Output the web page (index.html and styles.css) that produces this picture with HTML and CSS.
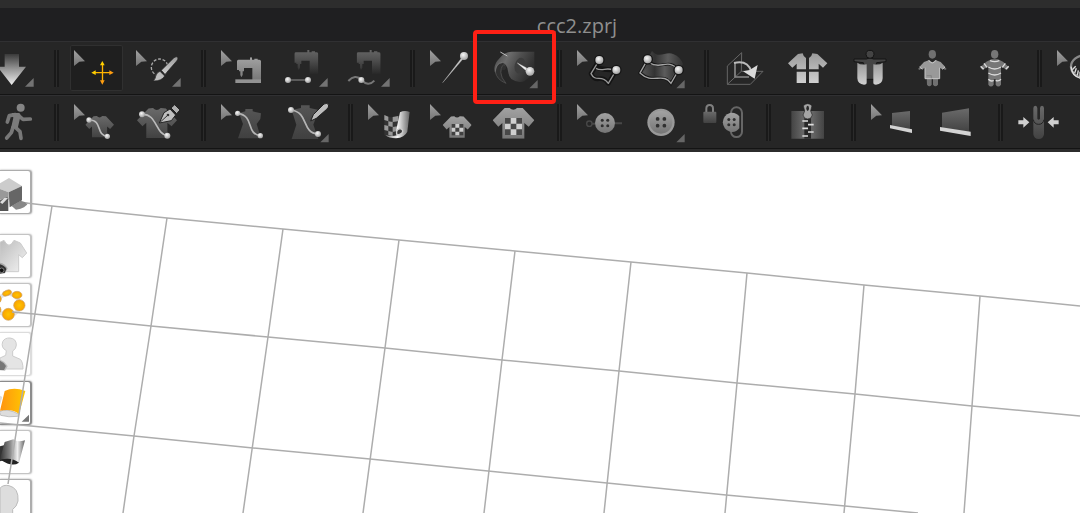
FILE: index.html
```
<!DOCTYPE html>
<html lang="en">
<head>
<meta charset="utf-8">
<title>ccc2.zprj</title>
<link rel="stylesheet" href="styles.css">
</head>
<body>
<svg class="defs" aria-hidden="true">
  <defs>
    <linearGradient id="light" x1="0" y1="0" x2="0" y2="1"><stop offset="0" stop-color="#9a9a9a"/><stop offset="1" stop-color="#d0d0d0"/></linearGradient>
    <linearGradient id="fade" x1="0" y1="0" x2="0" y2="1"><stop offset="0" stop-color="#3a3a3a"/><stop offset=".5" stop-color="#999"/><stop offset="1" stop-color="#eee"/></linearGradient>
    <linearGradient id="mid" x1="0" y1="0" x2="0" y2="1"><stop offset="0" stop-color="#a2a2a2"/><stop offset="1" stop-color="#757575"/></linearGradient>
    <linearGradient id="dim" x1="0" y1="0" x2="0" y2="1"><stop offset="0" stop-color="#6a6a6a"/><stop offset="1" stop-color="#424242"/></linearGradient>
    <linearGradient id="dark" x1="0" y1="0" x2="0" y2="1"><stop offset="0" stop-color="#555"/><stop offset="1" stop-color="#404040"/></linearGradient>
    <linearGradient id="vanish" x1="0" y1="0" x2="0" y2="1"><stop offset="0" stop-color="#666"/><stop offset=".4" stop-color="#505050"/><stop offset="1" stop-color="#282828"/></linearGradient>
    <linearGradient id="gold" x1="0" y1="0" x2="1" y2="0"><stop offset="0" stop-color="#ff9410"/><stop offset="1" stop-color="#ffc800"/></linearGradient>
    <linearGradient id="tube" x1="0" y1="0" x2="1" y2="0"><stop offset="0" stop-color="#777"/><stop offset=".5" stop-color="#f4f4f4"/><stop offset="1" stop-color="#666"/></linearGradient>
    <linearGradient id="waves" x1="0" y1="0" x2="1" y2="0"><stop offset="0" stop-color="#555"/><stop offset=".35" stop-color="#333"/><stop offset=".65" stop-color="#5c5c5c"/><stop offset="1" stop-color="#303030"/></linearGradient>
    <linearGradient id="roll" x1="0" y1="0" x2="1" y2=".4"><stop offset="0" stop-color="#444"/><stop offset=".35" stop-color="#6c6c6c"/><stop offset=".6" stop-color="#505050"/><stop offset="1" stop-color="#2e2e2e"/></linearGradient>
    <linearGradient id="paper" x1="0" y1="0" x2="1" y2="1"><stop offset="0" stop-color="#bbb"/><stop offset="1" stop-color="#f4f4f4"/></linearGradient>
    <linearGradient id="metal" x1="0" y1="0" x2="1" y2="0"><stop offset="0" stop-color="#333"/><stop offset=".4" stop-color="#888"/><stop offset=".7" stop-color="#eee"/><stop offset="1" stop-color="#666"/></linearGradient>
    <linearGradient id="plate" x1="0" y1="0" x2="1" y2="0"><stop offset="0" stop-color="#444"/><stop offset=".35" stop-color="#666"/><stop offset=".65" stop-color="#666"/><stop offset="1" stop-color="#444"/></linearGradient>
    <radialGradient id="pearl" cx=".4" cy=".35" r=".7"><stop offset="0" stop-color="#f8f8f8"/><stop offset="1" stop-color="#9c9c9c"/></radialGradient>
    <radialGradient id="amber" cx=".5" cy=".5" r=".6"><stop offset="0" stop-color="#ffc400"/><stop offset="1" stop-color="#f79a00"/></radialGradient>
  </defs>
  <symbol id="cursor" viewBox="0 0 159 138"><path d="M12 15L45 49L28 50L12 63Z" fill="url(#mid)"/></symbol>
  <symbol id="more" viewBox="0 0 159 138"><path d="M146 99V125H120Z" fill="#737373"/></symbol>
  <symbol id="more-low" viewBox="0 0 159 138"><path d="M149 105V130H124Z" fill="#666"/></symbol>
  <symbol id="tee" viewBox="0 0 125 93"><path d="M36 1L50 0Q62 12 74 0L90 1L125 38L108 57L95 46V93H29V46L17 57L0 38Z"/></symbol>
  <symbol id="machine" viewBox="0 0 72 72"><path d="M4 7H39V0H45V7H52V4H62V7H67Q72 7 72 12V72H46V32H21V42H17V53L13 60L10 53V42H6V38H0V12Q0 7 4 7Z"/></symbol>
  <symbol id="holes" viewBox="0 0 30 30"><g fill="#303030"><circle cx="6" cy="6" r="5"/><circle cx="24" cy="6" r="5"/><circle cx="6" cy="24" r="5"/><circle cx="24" cy="24" r="5"/></g></symbol>
</svg>

<header class="app-head">
  <div class="top-strip"></div>
  <h1 class="title">ccc2.zprj</h1>

  <div class="toolbar" role="toolbar" aria-label="Simulation and sewing tools">
    <button class="tool" aria-label="Simulate"><svg viewBox="0 0 159 138"><path d="M59 27H102V65H123L80 120L37 65H59Z" fill="url(#fade)"/><use href="#more"/></svg></button>
    <span class="sep"></span>
    <button class="tool active" aria-label="Select and move"><svg viewBox="0 0 159 138"><use href="#cursor"/><g stroke="#ffb400" stroke-width="4"><path d="M72 83H123M97.500 56V111"/></g><path d="M64 83L77 76V90Z" fill="#ffd000"/><path d="M97 48L104 61H90Z" fill="#ffd000"/><path d="M131 83L118 76V90ZM97 119L104 106H90Z" fill="#ff9d10"/></svg></button>
    <button class="tool" aria-label="Select mesh"><svg viewBox="0 0 159 138"><use href="#cursor"/><circle cx="83" cy="67" r="25" fill="none" stroke="#aaa" stroke-width="4" stroke-dasharray="9 5"/><path d="M88 76L126 38Q134 33 137 37Q140 42 134 48L99 88Z" fill="url(#light)" stroke="#222" stroke-width="2"/><path d="M84 79L98 93Q90 108 64 108Q71 100 71 94Q74 82 84 79Z" fill="#bdbdbd" stroke="#222" stroke-width="2"/><use href="#more"/></svg></button>
    <span class="sep"></span>
    <button class="tool" aria-label="Edit sewing"><svg viewBox="0 0 159 138"><use href="#cursor"/><use href="#machine" x="60" y="37" width="72" height="72" fill="url(#mid)"/><path d="M55 103H132V114H55Z" fill="#929292"/></svg></button>
    <button class="tool" aria-label="Segment sewing"><svg viewBox="0 0 159 138"><use href="#machine" x="46" y="15" width="72" height="72" fill="url(#vanish)"/><path d="M27 105H87" stroke="#777" stroke-width="4"/><circle cx="27" cy="105" r="9" fill="url(#pearl)"/><circle cx="87" cy="105" r="9" fill="url(#pearl)"/><use href="#more"/></svg></button>
    <button class="tool" aria-label="Free sewing"><svg viewBox="0 0 159 138"><use href="#machine" x="47" y="15" width="72" height="72" fill="url(#vanish)"/><path d="M22 108C35 94 49 91 62 105S87 121 100 107" fill="none" stroke="#777" stroke-width="6"/><circle cx="61" cy="105" r="9" fill="url(#pearl)"/><use href="#more"/></svg></button>
    <span class="sep"></span>
    <button class="tool" aria-label="Edit pin"><svg viewBox="0 0 159 138"><use href="#cursor"/><path d="M50 113L106 40L110 43Z" fill="#ccc" stroke="#bbb" stroke-width="1"/><circle cx="114" cy="33" r="12" fill="url(#pearl)"/></svg></button>
    <button class="tool marked" aria-label="Pin"><svg viewBox="0 0 159 138"><path d="M22 66Q40 44 54 62Q56 78 42 74Q37 92 54 115Q22 102 20 76Z" fill="#303030"/><path d="M22 80Q26 104 54 115Q39 98 38 82Q40 56 52 60" fill="none" stroke="#4a4a4a" stroke-width="3"/><path d="M71 20H139V66Q134 92 110 108Q90 116 70 102Q62 94 60 78Q56 54 42 54Q25 56 22 84Q12 62 36 38Q52 20 71 20Z" fill="url(#roll)"/><path d="M22 80Q24 54 42 53" fill="none" stroke="#777" stroke-width="2"/><ellipse cx="96" cy="62" rx="16" ry="24" fill="#3d3d3d" transform="rotate(15 96 62)"/><path d="M37 21L58 33" stroke="#c0c0c0" stroke-width="3"/><path d="M88 54L116 69L113 76Z" fill="#eee" stroke="#eee" stroke-width="1"/><circle cx="126" cy="79" r="13" fill="url(#pearl)"/><use href="#more-low"/></svg></button>
    <span class="sep"></span>
    <button class="tool" aria-label="Edit line"><svg viewBox="0 0 159 138"><use href="#cursor"/><g fill="none" stroke-linejoin="round"><path d="M79 45L54 86C69 119 85 84 106 115L130 75C108 75 89 75 69 66" stroke="#141414" stroke-width="14"/><path d="M79 45L54 86C68 114 86 86 106 115L130 75M69 70C88 82 100 64 121 76" stroke="#999" stroke-width="4"/></g><circle cx="79" cy="45" r="16" fill="#161616"/><circle cx="130" cy="75" r="16" fill="#161616"/><circle cx="79" cy="45" r="12" fill="url(#pearl)"/><circle cx="130" cy="75" r="12" fill="url(#pearl)"/></svg></button>
    <button class="tool" aria-label="Free surface"><svg viewBox="0 0 159 138"><path d="M51 18C72 44 94 16 116 28Q136 36 144 57L112 112C89 79 51 121 15 84Z" fill="url(#waves)"/><path d="M38 43L15 84C52 120 84 80 108 115L131 75C99 37 79 78 44 52" fill="none" stroke="#161616" stroke-width="10"/><path d="M50 58C82 76 98 48 124 72L106 106C84 82 56 108 24 82Z" fill="url(#waves)"/><path d="M38 43L15 84C52 120 84 80 108 115L131 75M44 54C79 76 96 37 131 75" fill="none" stroke="#a4a4a4" stroke-width="4"/><circle cx="38" cy="43" r="16" fill="#161616"/><circle cx="131" cy="75" r="16" fill="#161616"/><circle cx="38" cy="43" r="12" fill="url(#pearl)"/><circle cx="131" cy="75" r="12" fill="url(#pearl)"/><use href="#more-low"/></svg></button>
    <span class="sep"></span>
    <button class="tool" aria-label="Rotate view"><svg viewBox="0 0 159 138"><path d="M65 23L22 63V118H91L129 79H64ZM22 118L64 79" fill="none" stroke="#666" stroke-width="3"/><path d="M45 51V96H87" fill="none" stroke="#888" stroke-width="5"/><path d="M42 54C70 47 87 58 94 79" fill="none" stroke="#bbb" stroke-width="6"/><path d="M69 79L89 75L113 60L104 101Z" fill="#dadada"/></svg></button>
    <button class="tool" aria-label="Arrange pattern"><svg viewBox="0 0 159 138"><path d="M18 55L48 27L62 25Q64 36 72 39V73H44V56L31 68ZM136 55L106 27L91 25Q89 36 81 39V73H110V56L123 68ZM44 80H72V114H44ZM81 80H110V114H81Z" fill="url(#light)"/></svg></button>
    <button class="tool" aria-label="Wrap pattern"><svg viewBox="0 0 159 138"><g fill="#444" stroke="#141414" stroke-width="3"><path d="M30 42H67Q78 35 89 42H126V50L98 53L93 70V103H64V70L58 53L30 50Z"/><circle cx="78" cy="28" r="12"/></g><path d="M40 53Q49 61 68 58V112Q69 119 60 119Q41 118 40 100ZM116 53Q107 61 88 58V112Q87 119 96 119Q115 118 116 100Z" fill="url(#light)"/></svg></button>
    <button class="tool" aria-label="Dress avatar"><svg viewBox="0 0 159 138"><g fill="#707070"><ellipse cx="79" cy="28" rx="11" ry="13"/><path d="M36 72L47 61L51 67L41 75ZM122 72L111 61L107 67L117 75ZM62 98H77V119Q70 129 63 119ZM81 98H96V119Q88 129 81 119Z"/></g><path d="M70 45Q79 58 88 45L104 51L118 66L109 73L101 68V101H57V68L49 73L40 66L54 51Z" fill="#999"/><path d="M68 46Q79 62 90 46M57 68V101H101V68M41 66L49 73M117 66L109 73" fill="none" stroke="#c6c6c6" stroke-width="3"/><path d="M62 92H76V100" fill="none" stroke="#777" stroke-width="2"/></svg></button>
    <button class="tool" aria-label="Body tape"><svg viewBox="0 0 159 138"><g fill="#777"><ellipse cx="80" cy="28" rx="11" ry="13"/><path d="M70 43H90L105 50L123 67L117 74L99 65V119Q91 130 83 119V103H77V119Q69 130 61 119V65L43 74L37 67L55 50Z"/></g><path d="M66 47Q80 53 94 47M61 66Q80 78 99 66M61 84Q80 96 99 84M61 103Q69 111 77 106M83 106Q92 110 99 103M48 55L57 67M112 55L103 67M38 64L47 73M122 64L113 73" stroke="#dcdcdc" stroke-width="4" fill="none"/></svg></button>
    <span class="sep"></span>
    <button class="tool" aria-label="Measure"><svg viewBox="0 0 159 138"><use href="#cursor"/><ellipse cx="96" cy="65" rx="42" ry="34" fill="none" stroke="#888" stroke-width="7"/><path d="M54 65Q58 101 96 101" fill="none" stroke="#ddd" stroke-width="4"/><path d="M58 74L68 64M65 84L70 70M73 91L76 76M81 96V80" stroke="#ddd" stroke-width="4"/></svg></button>
  </div>

  <div class="toolbar" role="toolbar" aria-label="Pattern and trim tools">
    <button class="tool" aria-label="Walk"><svg viewBox="0 0 159 138"><circle cx="107" cy="26" r="12" fill="#858585"/><g fill="none" stroke="#787878" stroke-width="11" stroke-linecap="round" stroke-linejoin="round"><path d="M91 47L73 50L67 69M101 50L114 61L136 60M84 85L79 101L65 117M89 83L105 98L108 118"/></g><path d="M80 42H101Q108 43 106 54L98 88H78L85 56Z" fill="#7c7c7c"/></svg></button>
    <span class="sep"></span>
    <button class="tool" aria-label="Edit pattern curve"><svg viewBox="0 0 159 138"><use href="#cursor"/><use href="#tee" x="46" y="48" width="86" height="70" fill="url(#dim)"/><path d="M57 63C99 62 76 109 112 112" fill="none" stroke="#bbb" stroke-width="5"/><circle cx="57" cy="63" r="8" fill="url(#pearl)"/><circle cx="112" cy="112" r="8" fill="url(#pearl)"/></svg></button>
    <button class="tool" aria-label="Draw pattern"><svg viewBox="0 0 159 138"><use href="#tee" x="15" y="26" width="120" height="92" fill="url(#dim)"/><path d="M30 46C75 43 70 106 106 110" fill="none" stroke="#bbb" stroke-width="5"/><circle cx="30" cy="46" r="9" fill="url(#pearl)"/><circle cx="106" cy="110" r="9" fill="url(#pearl)"/><path d="M82 72L96 41L114 30L131 48L118 65Z" fill="#c0c0c0" stroke="#242424" stroke-width="3"/><path d="M117 27L128 17L144 33L134 44Z" fill="#b0b0b0" stroke="#222" stroke-width="3"/><path d="M84 70L108 48" stroke="#333" stroke-width="3"/><circle cx="108" cy="48" r="4" fill="#333"/></svg></button>
    <span class="sep"></span>
    <button class="tool" aria-label="Edit avatar line"><svg viewBox="0 0 159 138"><use href="#cursor"/><path d="M85 30H107V37L132 43L130 60L119 75L132 118H63L78 75L66 43L85 37Z" fill="url(#dark)"/><path d="M62 43C114 50 85 104 130 110" fill="none" stroke="#b4b4b4" stroke-width="5"/><circle cx="62" cy="43" r="8" fill="url(#pearl)"/><circle cx="130" cy="110" r="8" fill="url(#pearl)"/></svg></button>
    <button class="tool" aria-label="Draw avatar line"><svg viewBox="0 0 159 138"><path d="M66 19H92V27L119 33L103 77L118 120H38L52 77L38 33L66 27Z" fill="url(#dark)"/><path d="M36 33C91 40 66 101 117 105" fill="none" stroke="#b4b4b4" stroke-width="5"/><circle cx="36" cy="33" r="9" fill="url(#pearl)"/><circle cx="117" cy="105" r="9" fill="url(#pearl)"/><path d="M95 66L103 47L135 15Q145 10 149 18Q150 25 143 31L112 58Z" fill="#bdbdbd" stroke="#222" stroke-width="3"/><use href="#more-low"/></svg></button>
    <span class="sep"></span>
    <button class="tool" aria-label="Edit texture"><svg viewBox="0 0 159 138"><use href="#cursor"/><path d="M61 48Q83 62 108 48V112Q82 119 61 108Z" fill="#333"/><path d="M61 48L73 53V67L61 63ZM73 67L86 69V84L73 81ZM86 54L103 51V67L86 69ZM61 78L73 81V96L61 93ZM86 84L101 82V96L86 99ZM73 96L86 99V111L73 108Z" fill="#999"/><path d="M108 40Q122 32 137 39L130 98Q122 115 96 118Q74 118 64 108Q83 113 99 109L96 96Z" fill="url(#tube)"/><path d="M99 108Q94 92 108 89Q120 92 114 102Q108 108 99 108Z" fill="#3a3a3a" stroke="#ccc" stroke-width="4"/></svg></button>
    <button class="tool" aria-label="Move graphic"><svg viewBox="0 0 159 138"><use href="#cursor"/><use href="#tee" x="50" y="48" width="87" height="72" fill="url(#mid)"/><path d="M77 75H112V109H77Z" fill="#404040"/><path d="M88 75H100V86H88ZM77 86H88V98H77ZM100 86H112V98H100ZM88 98H100V109H88Z" fill="#ccc"/></svg></button>
    <button class="tool" aria-label="Graphic"><svg viewBox="0 0 159 138"><use href="#tee" x="14" y="26" width="125" height="93" fill="url(#mid)"/><path d="M51 57H102V108H51Z" fill="#484848"/><path d="M68 57H85V74H68ZM51 74H68V91H51ZM85 74H102V91H85ZM68 91H85V108H68Z" fill="#cfcfcf"/></svg></button>
    <span class="sep"></span>
    <button class="tool" aria-label="Move button"><svg viewBox="0 0 159 138"><use href="#cursor"/><circle cx="49" cy="74" r="8" fill="none" stroke="#484848" stroke-width="4"/><path d="M57 74H67M125 73H147" stroke="#484848" stroke-width="6"/><circle cx="96" cy="72" r="30" fill="url(#mid)"/><use href="#holes" x="82" y="58" width="28" height="28"/></svg></button>
    <button class="tool" aria-label="Button"><svg viewBox="0 0 159 138"><circle cx="78" cy="70" r="41" fill="#999"/><circle cx="78" cy="70" r="34" fill="url(#mid)"/><use href="#holes" x="61" y="53" width="34" height="34"/><use href="#more-low"/></svg></button>
    <button class="tool" aria-label="Fasten button"><svg viewBox="0 0 159 138"><path d="M28 41V29Q28 18 38 18T48 29V41" fill="none" stroke="#808080" stroke-width="6"/><rect x="19" y="38" width="39" height="34" rx="3" fill="url(#dim)"/><rect x="102" y="25" width="33" height="89" rx="16" fill="none" stroke="#666" stroke-width="6"/><path d="M127 52V88Q116 102 99 98A29 29 0 0 1 99 42Q116 39 127 52Z" fill="url(#mid)"/><use href="#holes" x="90" y="56" width="27" height="27"/></svg></button>
    <span class="sep"></span>
    <button class="tool" aria-label="Zipper"><svg viewBox="0 0 159 138"><path d="M28 36H126V119H28Z" fill="url(#plate)"/><path d="M67 48H87V119H67Z" fill="#282828"/><path d="M61 66H78M78 77H95M61 88H78M78 99H95M61 111H78" stroke="#ddd" stroke-width="5"/><path d="M64 20Q77 8 90 20L86 36L91 48Q89 60 77 60T63 48L68 36Z" fill="#a4a4a4" stroke="#222" stroke-width="2"/><ellipse cx="77" cy="28" rx="4" ry="8" fill="#292929"/></svg></button>
    <span class="sep"></span>
    <button class="tool" aria-label="Edit binding"><svg viewBox="0 0 159 138"><use href="#cursor"/><path d="M75 42L129 36V92L75 82Z" fill="url(#dim)"/><path d="M69 78L135 91V102L69 88Z" fill="#d4d4d4"/></svg></button>
    <button class="tool" aria-label="Binding"><svg viewBox="0 0 159 138"><path d="M39 41L120 28V99L39 86Z" fill="url(#dim)"/><path d="M33 84L125 98V111L33 95Z" fill="#d4d4d4"/></svg></button>
    <span class="sep"></span>
    <button class="tool" aria-label="Press fold"><svg viewBox="0 0 159 138"><path d="M58 28Q58 20 64 20T70 28V59Q74 65 78 59V28Q78 20 84 20T90 28V106Q88 120 74 120T58 106Z" fill="url(#dim)"/><path d="M58 62Q61 76 74 76T90 62" fill="none" stroke="#222" stroke-width="3"/><path d="M13 64H28V54L46 70L28 86V76H13ZM134 64H119V54L101 70L119 86V76H134Z" fill="#cfcfcf"/></svg></button>
  </div>
  <div class="base-strip"></div>
</header>

<main class="stage">
  <nav class="side" aria-label="View options">
    <button class="view strong" aria-label="Render style"><svg viewBox="0 0 96 132"><path d="M35 108L62 92L84 99Q78 115 48 119Z" fill="#888"/><path d="M0 40L27 24L66 48L26 67L0 57Z" fill="#ccc"/><path d="M26 67L66 48V91L29 112Z" fill="#666"/><path d="M0 57L26 67V89H0Z" fill="#999"/><path d="M0 91L22 82L25 86V123H0Z" fill="#555"/><path d="M0 97L13 84L24 84L7 102Z" fill="#ddd"/></svg></button>
    <button class="view" aria-label="Show garment"><svg viewBox="0 0 96 132"><path d="M0 25L12 19Q27 48 42 19L61 27L80 57L67 71L56 62V113H0Z" fill="url(#paper)" stroke="#ccc" stroke-width="3"/><path d="M0 86Q14 88 23 103L15 118L0 116" fill="#aaa"/><path d="M0 91Q13 94 19 105L14 117L0 119" fill="#333"/><circle cx="5" cy="109" r="7" fill="#111" stroke="#aaa" stroke-width="2"/></svg></button>
    <button class="view" aria-label="Show trims"><svg viewBox="0 0 96 132"><circle cx="25" cy="65" r="33" fill="none" stroke="#e2e2e2" stroke-width="12"/><g fill="url(#amber)" stroke="#caa36a" stroke-width="2"><ellipse cx="21" cy="30" rx="14" ry="8" transform="rotate(-20 21 30)"/><ellipse cx="51" cy="36" rx="15" ry="11"/><circle cx="58" cy="67" r="17"/><circle cx="25" cy="94" r="18"/><circle cx="-8" cy="80" r="11"/><circle cx="-8" cy="48" r="12"/></g></svg></button>
    <button class="view faint" aria-label="Show avatar"><svg viewBox="0 0 96 132"><path d="M17 70L19 56Q2 47 8 29Q14 17 30 18Q49 20 49 39Q49 51 38 57V72L61 82Q69 90 69 111H0V78Z" fill="#e4e4e4" stroke="#ccc" stroke-width="3"/><path d="M0 83Q14 87 23 103L15 116L0 115" fill="#bbb"/><path d="M0 86Q12 91 18 102L12 114H0" fill="#777"/></svg></button>
    <button class="view current" aria-label="Fabric surface"><svg viewBox="0 0 96 132"><path d="M0 44L7 48L0 71Z" fill="#ddd"/><path d="M-2 92Q20 79 57 100L53 106Q26 110 2 103Z" fill="#ddd" stroke="#aaa" stroke-width="2"/><path d="M14 30Q42 17 76 30L57 99Q37 82 0 89Z" fill="url(#gold)"/><path d="M87 101V122H65Z" fill="#777"/></svg></button>
    <button class="view" aria-label="Fabric thickness"><svg viewBox="0 0 96 132"><path d="M0 49L15 45V90L0 94Z" fill="#333"/><path d="M14 36L40 28Q51 38 75 31L57 98Q38 112 0 87Z" fill="url(#metal)"/><path d="M4 88Q36 81 57 98Q36 112 4 91Z" fill="#222"/></svg></button>
    <button class="view strong" aria-label="Avatar surface"><svg viewBox="0 0 96 132"><path d="M0 28Q9 16 27 20Q57 27 54 66Q50 84 38 91V108L54 117V132H0Z" fill="#ddd" stroke="#bbb" stroke-width="3"/></svg></button>
  </nav>
  <svg class="floor" viewBox="0 0 1080 361" preserveAspectRatio="xMinYMin slice" aria-hidden="true">
    <g fill="none" stroke="#adadad" stroke-width="1.500">
      <path d="M26 51L52 54L167 66L283 77L399 88L515 99L631 110L747 121L864 133L980 144L1080 154"/>
      <path d="M12 160L34 162L151 174L268 185L385 196L502 208L619 219L737 231L855 242L972 254L1080 264"/>
      <path d="M0 271L134 284L253 296L370 307L488 319L607 331L726 343L845 354L918 361"/>
      <path d="M52 54L8 332M167 66L151 174L134 284L123 361M283 77L268 185L243 361M399 88L385 196L363 361M515 99L502 208L484 361M631 110L619 219L604 361M747 121L737 231L725 361M864 133L855 242L844 361M980 144L972 254L964 361"/>
    </g>
  </svg>
</main>
</body>
</html>
```
FILE: styles.css
```
* { box-sizing: border-box; }

body {
  margin: 0;
  height: 100vh;
  display: flex;
  flex-direction: column;
  overflow: hidden;
  background: #fff;
  font-family: "Open Sans", "Noto Sans", sans-serif;
}

.defs { position: absolute; width: 0; height: 0; }

.app-head { flex: none; background: #262626; }
.top-strip { height: 8px; background: #2d2d2d; }

.title {
  margin: 0;
  padding: 2px 0 0 74px;
  background: #1f1f21;
  color: #8f8f8f;
  font-size: 20px;
  font-weight: 400;
  line-height: 31px;
  text-align: center;
}

.toolbar {
  display: flex;
  gap: 9px;
  margin-left: -15px;
  padding: 3px 0;
  border-top: 1px solid #303032;
  border-bottom: 1px solid #141414;
}

.tool {
  flex: none;
  width: 53px;
  height: 46px;
  padding: 0;
  border: 0;
  border-radius: 2px;
  background: none;
}
.tool svg { display: block; width: 100%; height: 100%; }
.tool.active { background: #1f1f1f; box-shadow: inset 0 0 0 1px #303030; }

.tool.marked { position: relative; }
.tool.marked::after {
  content: "";
  position: absolute;
  z-index: 2;
  inset: -15px -15px -13px;
  border: 4px solid #ff2015;
  border-radius: 4px;
}

.sep { flex: none; width: 14px; padding: 5px 2px 4px 7px; }
.sep::before {
  content: "";
  display: block;
  height: 100%;
  border: solid #191919;
  border-width: 0 2px;
  background: #2b2b2b;
}

.base-strip { height: 3px; background: #2c2c2c; }

.stage { position: relative; flex: 1; min-height: 0; overflow: hidden; }

.side {
  display: flex;
  flex-direction: column;
  align-items: flex-start;
  gap: 5px;
  padding-top: 18px;
}

.view {
  flex: none;
  width: 32px;
  height: 44px;
  padding: 0;
  overflow: hidden;
  border: 0;
  border-radius: 0 3px 3px 0;
  background: #fff;
  box-shadow: inset -1px 0 0 1px #c4c4c4, 0 0 2px #bbb;
}
.view svg { display: block; width: 32px; height: 44px; }
.view.strong { box-shadow: inset -1px 0 0 1px #adadad, 0 0 2px #999; }
.view.strong:first-child { margin-bottom: 15px; }
.view.faint { box-shadow: inset -1px 0 0 1px #dcdcdc, 0 0 2px #ddd; }
.view.current { box-shadow: inset -1px 0 0 1px #8c8c8c, 0 0 2px #777; }

.floor {
  position: absolute;
  inset: 0;
  width: 100%;
  height: 100%;
  pointer-events: none;
}
```
